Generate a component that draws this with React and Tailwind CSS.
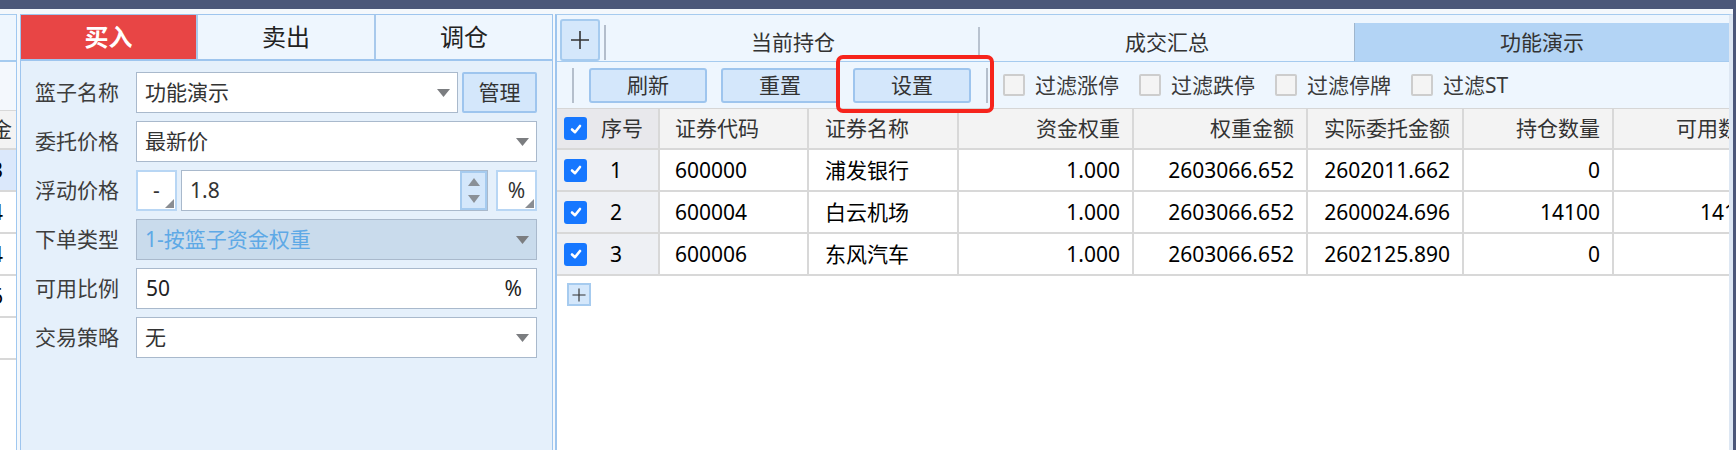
import React from "react";

const FONT = "font-['Noto_Sans','Noto_Sans_CJK_SC',sans-serif]";

function Caret() {
  return (
    <svg width="13" height="8" viewBox="0 0 13 8">
      <path d="M0 0H13L6.5 8Z" fill="#7b7d80" />
    </svg>
  );
}

function Plus({ size = 22 }) {
  return (
    <svg width={size} height={size} viewBox="0 0 22 22">
      <path d="M11 2V20M2 11H20" stroke="#333" strokeWidth="1.6" />
    </svg>
  );
}

function Check() {
  return (
    <div className="w-[23px] h-[23px] rounded-[3px] bg-[#1677ff] flex items-center justify-center shrink-0">
      <svg width="14" height="14" viewBox="0 0 14 14">
        <path
          d="M3 7.5L6 10.2L11 4"
          stroke="white"
          strokeWidth="2.6"
          fill="none"
          strokeLinecap="round"
          strokeLinejoin="round"
        />
      </svg>
    </div>
  );
}

function Corner() {
  return (
    <svg width="9" height="9" viewBox="0 0 9 9" className="absolute right-[1px] bottom-[1px]">
      <path d="M9 0V9H0Z" fill="#8a8d92" />
    </svg>
  );
}

const cols = [
  { key: "code", label: "证券代码", w: "w-[149px]", align: "left", pl: "pl-[15px]" },
  { key: "name", label: "证券名称", w: "w-[150px]", align: "left", pl: "pl-[16px]" },
  { key: "weight", label: "资金权重", w: "w-[175px]", align: "right" },
  { key: "amount", label: "权重金额", w: "w-[174px]", align: "right" },
  { key: "actual", label: "实际委托金额", w: "w-[156px]", align: "right" },
  { key: "qty", label: "持仓数量", w: "w-[150px]", align: "right" },
  { key: "avail", label: "可用数量", w: "w-[160px]", align: "right" },
];

const rows = [
  { no: 1, code: "600000", name: "浦发银行", weight: "1.000", amount: "2603066.652", actual: "2602011.662", qty: "0", avail: "" },
  { no: 2, code: "600004", name: "白云机场", weight: "1.000", amount: "2603066.652", actual: "2600024.696", qty: "14100", avail: "14100" },
  { no: 3, code: "600006", name: "东风汽车", weight: "1.000", amount: "2603066.652", actual: "2602125.890", qty: "0", avail: "" },
];

function FormRow({ label, children }) {
  return (
    <div className="flex items-center h-[41px]">
      <div className="w-[101px] text-[21px] leading-none text-[#3d3d3d]">{label}</div>
      <div className="flex-1 flex h-full">{children}</div>
    </div>
  );
}

function Select({ value, disabled }) {
  return (
    <div
      className={
        disabled
          ? "flex-1 h-full flex items-center justify-between pl-[8px] pr-[7px] border border-[#a9b9cc] bg-[#c9dbec]"
          : "flex-1 h-full flex items-center justify-between pl-[8px] pr-[7px] border border-[#a9b9cc] bg-white"
      }
    >
      <span className={disabled ? "text-[21px] leading-none text-[#5ea9e6]" : "text-[21px] leading-none text-[#333]"}>
        {value}
      </span>
      <Caret />
    </div>
  );
}

export default function App() {
  return (
    <div className={`${FONT} relative w-[1736px] h-[450px] overflow-hidden bg-[#4b5779]`}>
      <div className="mr-[3px] mt-[9px] h-[441px] bg-[#f4f8fc] pt-[5px] flex">
        {/* clipped panel on the far left */}
        <div className="w-[17px] border-r border-[#a0c8f0] flex flex-col bg-white shrink-0">
          <div className="h-[48px] bg-[#eef6fe] border-t border-b-2 border-[#a6cbef]" />
          <div className="h-[48px] bg-[#f4f8fd]" />
          <div className="h-[40px] bg-[#f3f3f3] border-t border-b-2 border-[#d8d8d8] flex items-center justify-end overflow-hidden">
            <span className="whitespace-nowrap text-[21px] leading-none text-[#333] mr-[4px]">资金</span>
          </div>
          {["3", "4", "4", "6", ""].map((d, i) => (
            <div
              key={i}
              className={
                i === 0
                  ? "h-[42px] bg-[#dbe8fb] border-b-2 border-[#d8d8d8] flex items-center justify-end overflow-hidden"
                  : "h-[42px] bg-white border-b-2 border-[#d8d8d8] flex items-center justify-end overflow-hidden"
              }
            >
              <span className="whitespace-nowrap text-[21px] leading-none text-black mr-[13px]">{d ? "2.0" + d : ""}</span>
            </div>
          ))}
        </div>

        {/* order panel */}
        <div className="ml-[3px] w-[533px] shrink-0 border-l border-r border-t border-[#9ec5ee] bg-[#e5f0fb] flex flex-col">
          <div className="h-[46px] flex border-b-2 border-[#9ec5ee] bg-[#eef6fe]">
            <div className="w-[175px] bg-[#e84545] flex items-center justify-center text-white font-bold text-[24px] leading-none">
              买入
            </div>
            <div className="flex-1 border-l-2 border-[#a8c9ec] flex items-center justify-center text-[24px] leading-none text-[#222]">
              卖出
            </div>
            <div className="flex-1 border-l-2 border-[#a8c9ec] flex items-center justify-center text-[24px] leading-none text-[#222]">
              调仓
            </div>
          </div>

          <div className="pt-[11px] pl-[14px] pr-[15px] flex flex-col gap-[8px]">
            <FormRow label="篮子名称">
              <Select value="功能演示" />
              <div className="ml-[4px] w-[75px] h-full border-2 border-[#9ec5ee] bg-[#d4e7fb] rounded-[2px] flex items-center justify-center text-[21px] leading-none text-[#333]">
                管理
              </div>
            </FormRow>
            <FormRow label="委托价格">
              <Select value="最新价" />
            </FormRow>
            <FormRow label="浮动价格">
              <div className="relative w-[41px] h-full border-2 border-[#b8d6f4] bg-white flex items-center justify-center text-[21px] leading-none text-[#333]">
                -
                <Corner />
              </div>
              <div className="ml-[4px] flex-1 h-full flex border border-[#a9b9cc] bg-white">
                <div className="flex-1 flex items-center pl-[8px] text-[21px] leading-none text-[#333]">1.8</div>
                <div className="w-[27px] h-full bg-[#d4e7fb] border-2 border-[#a6cbef] flex flex-col items-center justify-between py-[5px]">
                  <svg width="12" height="8" viewBox="0 0 12 8">
                    <path d="M0 8H12L6 0Z" fill="#8a9097" />
                  </svg>
                  <svg width="12" height="8" viewBox="0 0 12 8">
                    <path d="M0 0H12L6 8Z" fill="#8a9097" />
                  </svg>
                </div>
              </div>
              <div className="relative ml-[8px] w-[41px] h-full border-2 border-[#b8d6f4] bg-white flex items-center justify-center text-[21px] leading-none text-[#333]">
                %
                <Corner />
              </div>
            </FormRow>
            <FormRow label="下单类型">
              <Select value="1-按篮子资金权重" disabled />
            </FormRow>
            <FormRow label="可用比例">
              <div className="flex-1 h-full flex items-center justify-between pl-[9px] pr-[14px] border border-[#a9b9cc] bg-white text-[21px] leading-none text-[#222]">
                <span>50</span>
                <span>%</span>
              </div>
            </FormRow>
            <FormRow label="交易策略">
              <Select value="无" />
            </FormRow>
          </div>
        </div>

        {/* holdings panel */}
        <div className="ml-[2px] flex-1 min-w-0 border-l-2 border-t border-r-4 border-l-[#9ec5ee] border-t-[#a6cbef] border-r-[#dde7f3] bg-white flex flex-col overflow-hidden">
          <div className="h-[47px] flex items-end bg-[#eef6fe] border-b border-[#a6cbef]">
            <div className="ml-[3px] w-[40px] h-[42px] bg-[#d4e7fb] border-2 border-[#a6cbef] rounded-[3px] flex items-center justify-center">
              <Plus />
            </div>
            <div className="ml-[4px] mb-[1px] w-[2px] h-[35px] bg-[#b3bdcb]" />
            <div className="flex-1 flex items-end h-full">
              <div className="flex-1 h-[38px] flex items-center justify-center text-[21px] leading-none text-[#333] relative">
                当前持仓
                <div className="absolute right-0 bottom-[2px] w-[2px] h-[32px] bg-[#b9c3d0]" />
              </div>
              <div className="flex-1 h-[38px] flex items-center justify-center text-[21px] leading-none text-[#333]">成交汇总</div>
              <div className="flex-1 h-[38px] bg-[#b3d4f5] border-l border-[#9fb6cd] flex items-center justify-center text-[21px] leading-none text-[#333]">
                功能演示
              </div>
            </div>
          </div>

          <div className="h-[46px] shrink-0 bg-[#eef6fe] flex items-center pl-[15px]">
            <div className="w-[2px] h-[35px] bg-[#b5bfcc]" />
            <div className="ml-[15px] flex gap-[14px]">
              {["刷新", "重置", "设置"].map((t) => (
                <div
                  key={t}
                  className="w-[118px] h-[35px] bg-[#d4e7fb] border-2 border-[#9ec5ee] rounded-[3px] flex items-center justify-center text-[21px] leading-none text-[#333]"
                >
                  {t}
                </div>
              ))}
            </div>
            <div className="ml-[15px] w-[2px] h-[35px] bg-[#b5bfcc]" />
            <div className="ml-[15px] flex items-center gap-[20px]">
              {["过滤涨停", "过滤跌停", "过滤停牌", "过滤ST"].map((t) => (
                <div key={t} className="flex items-center gap-[10px]">
                  <div className="w-[22px] h-[22px] bg-[#f4f4f4] border-2 border-[#cdcdcd] rounded-[2px]" />
                  <span className="text-[21px] leading-none text-[#3a3a3a]">{t}</span>
                </div>
              ))}
            </div>
          </div>

          <div className="flex h-[42px] shrink-0 border-t border-[#d6d6d6]">
            <div className="w-[103px] shrink-0 h-full bg-[#e8e8ec] border-r-2 border-b-2 border-[#d8d8d8] flex items-center">
              <div className="ml-[7px]">
                <Check />
              </div>
              <span className="ml-[14px] text-[21px] leading-none text-[#333]">序号</span>
            </div>
            {cols.map((c) => (
              <div
                key={c.key}
                className={`${c.w} shrink-0 h-full bg-[#f3f3f3] border-r-2 border-b-2 border-[#d8d8d8] flex items-center text-[21px] leading-none text-[#333] whitespace-nowrap ${
                  c.align === "right" ? "justify-end pr-[12px]" : c.pl
                }`}
              >
                {c.label}
              </div>
            ))}
          </div>

          {rows.map((r) => (
            <div key={r.no} className="flex h-[42px] shrink-0">
              <div className="w-[103px] shrink-0 h-full bg-[#eef0f4] border-r-2 border-b-2 border-[#d8d8d8] flex items-center">
                <div className="ml-[7px]">
                  <Check />
                </div>
                <span className="ml-[14px] w-[30px] text-center text-[21px] leading-none text-black">{r.no}</span>
              </div>
              {cols.map((c) => (
                <div
                  key={c.key}
                  className={`${c.w} shrink-0 h-full bg-white border-r-2 border-b-2 border-[#d8d8d8] flex items-center text-[21px] leading-none text-black whitespace-nowrap ${
                    c.align === "right" ? "justify-end pr-[12px]" : c.pl
                  }`}
                >
                  {r[c.key]}
                </div>
              ))}
            </div>
          ))}

          <div className="ml-[10px] mt-[7px] w-[24px] h-[23px] bg-[#d4e7fb] border-2 border-[#a6cbef] flex items-center justify-center">
            <Plus size={16} />
          </div>
        </div>
      </div>

      <div className="absolute left-[836px] top-[55px] w-[158px] h-[58px] border-4 border-[#f6241c] rounded-[7px]" />
    </div>
  );
}
